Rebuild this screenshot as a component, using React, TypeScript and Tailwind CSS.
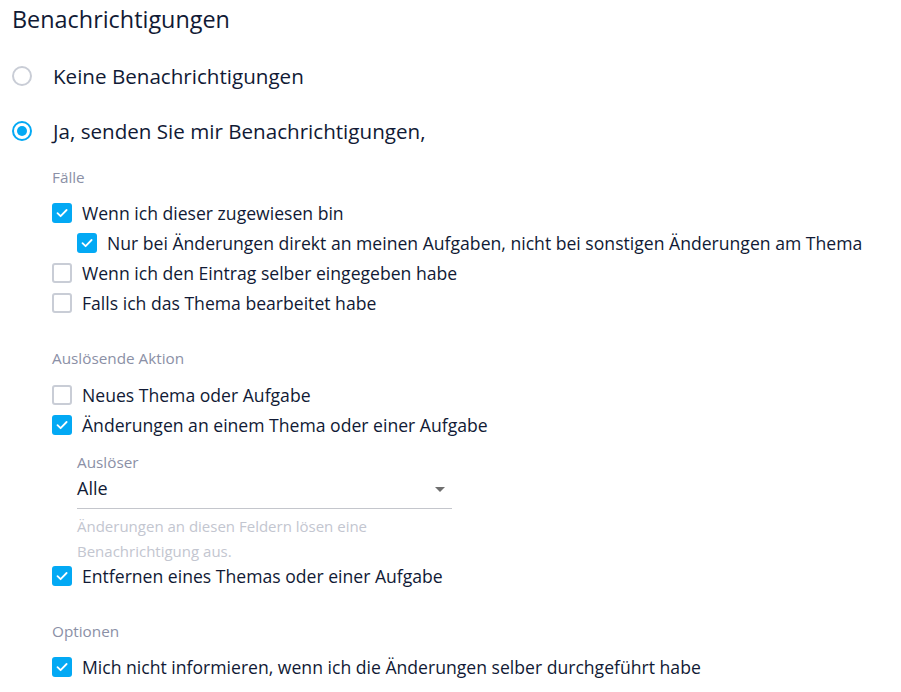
import React from "react";

const font = { fontFamily: '"Open Sans", "Noto Sans", sans-serif' };

function Radio({ checked, label }: { checked?: boolean; label: string }) {
  return (
    <div className="flex h-10 items-center">
      <span
        className={
          "flex h-5 w-5 shrink-0 items-center justify-center rounded-full border-2 " +
          (checked ? "border-[#03a9f4]" : "border-[#c9cdd6]")
        }
      >
        {checked && <span className="h-[10px] w-[10px] rounded-full bg-[#03a9f4]" />}
      </span>
      <span className="ml-[21px] text-[20.6px] text-[#111a35]">{label}</span>
    </div>
  );
}

function Check({ checked, label, nested }: { checked?: boolean; label: string; nested?: boolean }) {
  return (
    <div className={"flex h-[30px] items-center " + (nested ? "ml-[25px]" : "")}>
      {checked ? (
        <span className="flex h-5 w-5 shrink-0 items-center justify-center rounded-[3px] bg-[#03a9f4]">
          <svg width="14" height="14" viewBox="0 0 14 14" fill="none">
            <path d="M2.5 7.2 5.6 10.2 11.6 4" stroke="#fff" strokeWidth="1.8" strokeLinecap="round" strokeLinejoin="round" />
          </svg>
        </span>
      ) : (
        <span className="h-5 w-5 shrink-0 rounded-[3px] border-2 border-[#c9cdd6] bg-white" />
      )}
      <span className="ml-[10px] text-[17.6px] text-[#111a35]">{label}</span>
    </div>
  );
}

function SectionLabel({ children, className }: { children: React.ReactNode; className?: string }) {
  return <div className={"h-5 text-[15.3px] leading-5 text-[#8b90a6] " + (className ?? "")}>{children}</div>;
}

export default function App() {
  return (
    <div className="min-h-[692px] w-[901px] bg-white pl-3" style={font}>
      <h2 className="h-[38px] text-[23.4px] leading-[38px] text-[#111a35]">Benachrichtigungen</h2>

      <div className="mt-[18px]">
        <Radio label="Keine Benachrichtigungen" />
      </div>
      <div className="mt-[15px]">
        <Radio checked label="Ja, senden Sie mir Benachrichtigungen," />
      </div>

      <div className="ml-10">
        <SectionLabel className="mt-4">Fälle</SectionLabel>
        <div className="mt-[11px]">
          <Check checked label="Wenn ich dieser zugewiesen bin" />
          <Check checked nested label="Nur bei Änderungen direkt an meinen Aufgaben, nicht bei sonstigen Änderungen am Thema" />
          <Check label="Wenn ich den Eintrag selber eingegeben habe" />
          <Check label="Falls ich das Thema bearbeitet habe" />
        </div>

        <SectionLabel className="mt-[30px]">Auslösende Aktion</SectionLabel>
        <div className="mt-3">
          <Check label="Neues Thema oder Aufgabe" />
          <Check checked label="Änderungen an einem Thema oder einer Aufgabe" />
        </div>

        <div className="ml-[25px] w-[375px]">
          <SectionLabel className="mt-3">Auslöser</SectionLabel>
          <div className="flex h-[37px] items-center justify-between border-b border-[#c4c6cc] pb-1">
            <span className="text-[18px] text-[#111a35]">Alle</span>
            <svg width="10" height="5" viewBox="0 0 10 5" className="mr-[7px] mt-[3px]">
              <path d="M0 0h10L5 5z" fill="#6f6f6f" />
            </svg>
          </div>
          <div className="mt-[5px] h-[48px] text-[15px] leading-[25px] text-[#c3c6d0]">
            Änderungen an diesen Feldern lösen eine
            <br />
            Benachrichtigung aus.
          </div>
        </div>
        <div className="-mt-[1px]">
          <Check checked label="Entfernen eines Themas oder einer Aufgabe" />
        </div>

        <SectionLabel className="mt-[30px]">Optionen</SectionLabel>
        <div className="mt-[11px]">
          <Check checked label="Mich nicht informieren, wenn ich die Änderungen selber durchgeführt habe" />
        </div>
      </div>
    </div>
  );
}
